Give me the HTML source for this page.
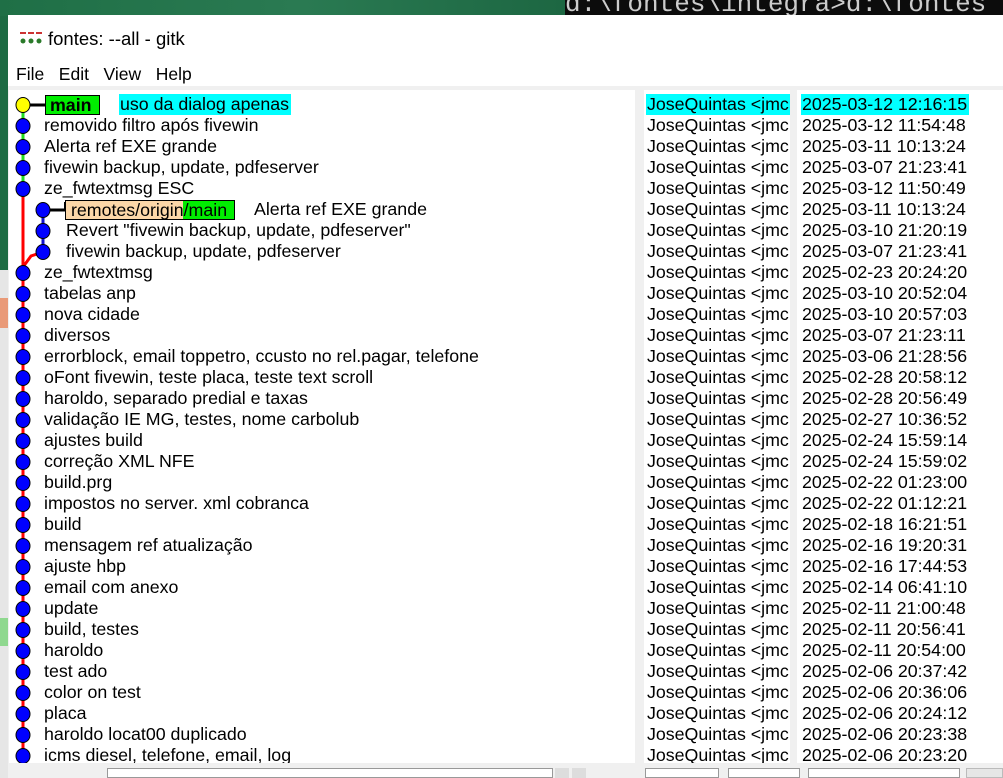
<!DOCTYPE html>
<html><head><meta charset="utf-8"><style>
*{margin:0;padding:0;box-sizing:border-box}
body{width:1003px;height:778px;overflow:hidden;position:relative;background:#1d6b43;font-family:"Liberation Sans",sans-serif;font-size:17.8px;color:#000}
.a{position:absolute}
.t{position:absolute;white-space:nowrap;line-height:21px;height:21px}
</style></head><body>
<div class="a" style="left:0;top:0;width:1003px;height:16px;background:linear-gradient(90deg,#1f6f46,#2a7a52 30%,#1b6440 60%)"></div>
<div class="a" style="left:565px;top:0;width:438px;height:15px;background:#0c0c0c;overflow:hidden"><div style="font-family:'Liberation Mono',monospace;font-size:26px;color:#ccc;line-height:20px;margin-top:-6px;white-space:nowrap">d:\fontes\integra&gt;d:\fontes</div></div>
<div class="a" style="left:0;top:270px;width:8px;height:508px;background:#e6e6e6"></div>
<div class="a" style="left:0;top:298px;width:8px;height:30px;background:#e99a78"></div>
<div class="a" style="left:0;top:618px;width:8px;height:28px;background:#8fd88f"></div>
<div class="a" style="left:8px;top:15px;width:995px;height:763px;background:#fff"></div>
<svg class="a" style="left:20px;top:32px" width="22" height="14"><rect x="0" y="0" width="6" height="2" fill="#c33"/><rect x="8" y="0" width="6" height="2" fill="#c33"/><rect x="16" y="0" width="6" height="2" fill="#c33"/><circle cx="3" cy="9" r="2.5" fill="#2a7a2a"/><circle cx="11" cy="9" r="2.5" fill="#2a7a2a"/><circle cx="19" cy="9" r="2.5" fill="#2a7a2a"/></svg>
<div class="t" style="left:48px;top:28px;font-size:18.5px">fontes: --all - gitk</div>
<div class="t" style="left:16px;top:64px;font-size:17.5px">File&nbsp;&nbsp; Edit&nbsp;&nbsp; View&nbsp;&nbsp; Help</div>
<div class="a" style="left:8px;top:86px;width:995px;height:692px;background:#f0f0f0"></div>
<div class="a" style="left:9px;top:90px;width:626px;height:673px;background:#fff;overflow:hidden" id="g"></div>
<div class="a" style="left:644px;top:90px;width:146px;height:673px;background:#fff;overflow:hidden" id="au"></div>
<div class="a" style="left:797px;top:90px;width:206px;height:673px;background:#fff;overflow:hidden" id="dt"></div>
<div class="a" style="left:107px;top:768px;width:446px;height:10px;background:#fff;border:1px solid #999"></div>
<div class="a" style="left:555px;top:768px;width:14px;height:10px;background:#ddd"></div>
<div class="a" style="left:572px;top:768px;width:14px;height:10px;background:#ddd"></div>
<div class="a" style="left:645px;top:768px;width:74px;height:10px;background:#fff;border:1px solid #999"></div>
<div class="a" style="left:728px;top:768px;width:72px;height:10px;background:#fff;border:1px solid #999"></div>
<div class="a" style="left:808px;top:768px;width:152px;height:10px;background:#fff;border:1px solid #999"></div>
<div class="a" style="left:966px;top:768px;width:37px;height:10px;background:#e6e6e6;border:1px solid #bbb"></div>
<script>
var msgs=["","removido filtro após fivewin","Alerta ref EXE grande","fivewin backup, update, pdfeserver","ze_fwtextmsg ESC","","Revert \"fivewin backup, update, pdfeserver\"","fivewin backup, update, pdfeserver","ze_fwtextmsg","tabelas anp","nova cidade","diversos","errorblock, email toppetro, ccusto no rel.pagar, telefone","oFont fivewin, teste placa, teste text scroll","haroldo, separado predial e taxas","validação IE MG, testes, nome carbolub","ajustes build","correção XML NFE","build.prg","impostos no server. xml cobranca","build","mensagem ref atualização","ajuste hbp","email com anexo","update","build, testes","haroldo","test ado","color on test","placa","haroldo locat00 duplicado","icms diesel, telefone, email, log"];
var dates=["2025-03-12 12:16:15","2025-03-12 11:54:48","2025-03-11 10:13:24","2025-03-07 21:23:41","2025-03-12 11:50:49","2025-03-11 10:13:24","2025-03-10 21:20:19","2025-03-07 21:23:41","2025-02-23 20:24:20","2025-03-10 20:52:04","2025-03-10 20:57:03","2025-03-07 21:23:11","2025-03-06 21:28:56","2025-02-28 20:58:12","2025-02-28 20:56:49","2025-02-27 10:36:52","2025-02-24 15:59:14","2025-02-24 15:59:02","2025-02-22 01:23:00","2025-02-22 01:12:21","2025-02-18 16:21:51","2025-02-16 19:20:31","2025-02-16 17:44:53","2025-02-14 06:41:10","2025-02-11 21:00:48","2025-02-11 20:56:41","2025-02-11 20:54:00","2025-02-06 20:37:42","2025-02-06 20:36:06","2025-02-06 20:24:12","2025-02-06 20:23:38","2025-02-06 20:23:20"];
var g=document.getElementById('g'),au=document.getElementById('au'),dt=document.getElementById('dt');
var s='<svg width="626" height="673" style="position:absolute;left:0;top:0">';
function cy(i){return 15+21*i}
s+='<line x1="14" y1="'+cy(0)+'" x2="14" y2="'+cy(4)+'" stroke="#22dd22" stroke-width="3"/>';
s+='<line x1="14" y1="'+cy(4)+'" x2="14" y2="680" stroke="#f00" stroke-width="3"/>';
s+='<line x1="34" y1="'+cy(5)+'" x2="34" y2="'+cy(7)+'" stroke="#11c" stroke-width="3"/>';
s+='<polyline points="34,'+cy(7)+' 22,'+(cy(7)+4)+' 14,'+(cy(8)-6)+'" fill="none" stroke="#f00" stroke-width="3"/>';
s+='<line x1="14" y1="'+cy(0)+'" x2="36" y2="'+cy(0)+'" stroke="#000" stroke-width="3"/>';
s+='<line x1="34" y1="'+cy(5)+'" x2="57" y2="'+cy(5)+'" stroke="#000" stroke-width="3"/>';
s+='<line x1="56" y1="'+(cy(5)-8)+'" x2="56" y2="'+(cy(5)+1)+'" stroke="#000" stroke-width="2"/>';
for(var i=0;i<32;i++){var x=(i>=5&&i<=7)?34:14;s+='<ellipse cx="'+x+'" cy="'+cy(i)+'" rx="7" ry="7.5" fill="'+(i==0?'#ff0':'#00f')+'" stroke="#000" stroke-width="1"/>';}
s+='</svg>';
var h=s;
for(var i=0;i<32;i++){var x=(i>=5&&i<=7)?57:35;if(msgs[i])h+='<div class="t" style="left:'+x+'px;top:'+(cy(i)-11)+'px">'+msgs[i].replace(/</g,'&lt;')+'</div>';}
h+='<div class="a" style="left:36px;top:5px;width:55px;height:20px;background:#00ee00;border:1px solid #000;font-weight:bold;line-height:18px;padding-left:4px">main</div>';
h+='<div class="t" style="left:110px;top:4px;background:#00ffff;padding:0 2px 0 1px">uso da dialog apenas</div>';
h+='<div class="a" style="left:56px;top:'+(cy(5)-10)+'px;width:170px;height:20px;border:1px solid #000;line-height:18px;white-space:nowrap;background:linear-gradient(90deg,#fcd7a8 0,#fcd7a8 117px,#00ee00 117px)">&nbsp;remotes/origin/main</div>';
h+='<div class="t" style="left:245px;top:'+(cy(5)-11)+'px">Alerta ref EXE grande</div>';
g.innerHTML=h;
var a='',d='';
for(var i=0;i<32;i++){var bg=i==0?'background:#0ff;':'';a+='<div class="t" style="left:2px;top:'+(cy(i)-11)+'px;width:144px;'+bg+'padding-left:1px">JoseQuintas &lt;jmc</div>';d+='<div class="t" style="left:4px;top:'+(cy(i)-11)+'px;'+bg+'padding:0 2px 0 1px">'+dates[i]+'</div>';}
au.innerHTML=a;dt.innerHTML=d;
</script>
</body></html>
